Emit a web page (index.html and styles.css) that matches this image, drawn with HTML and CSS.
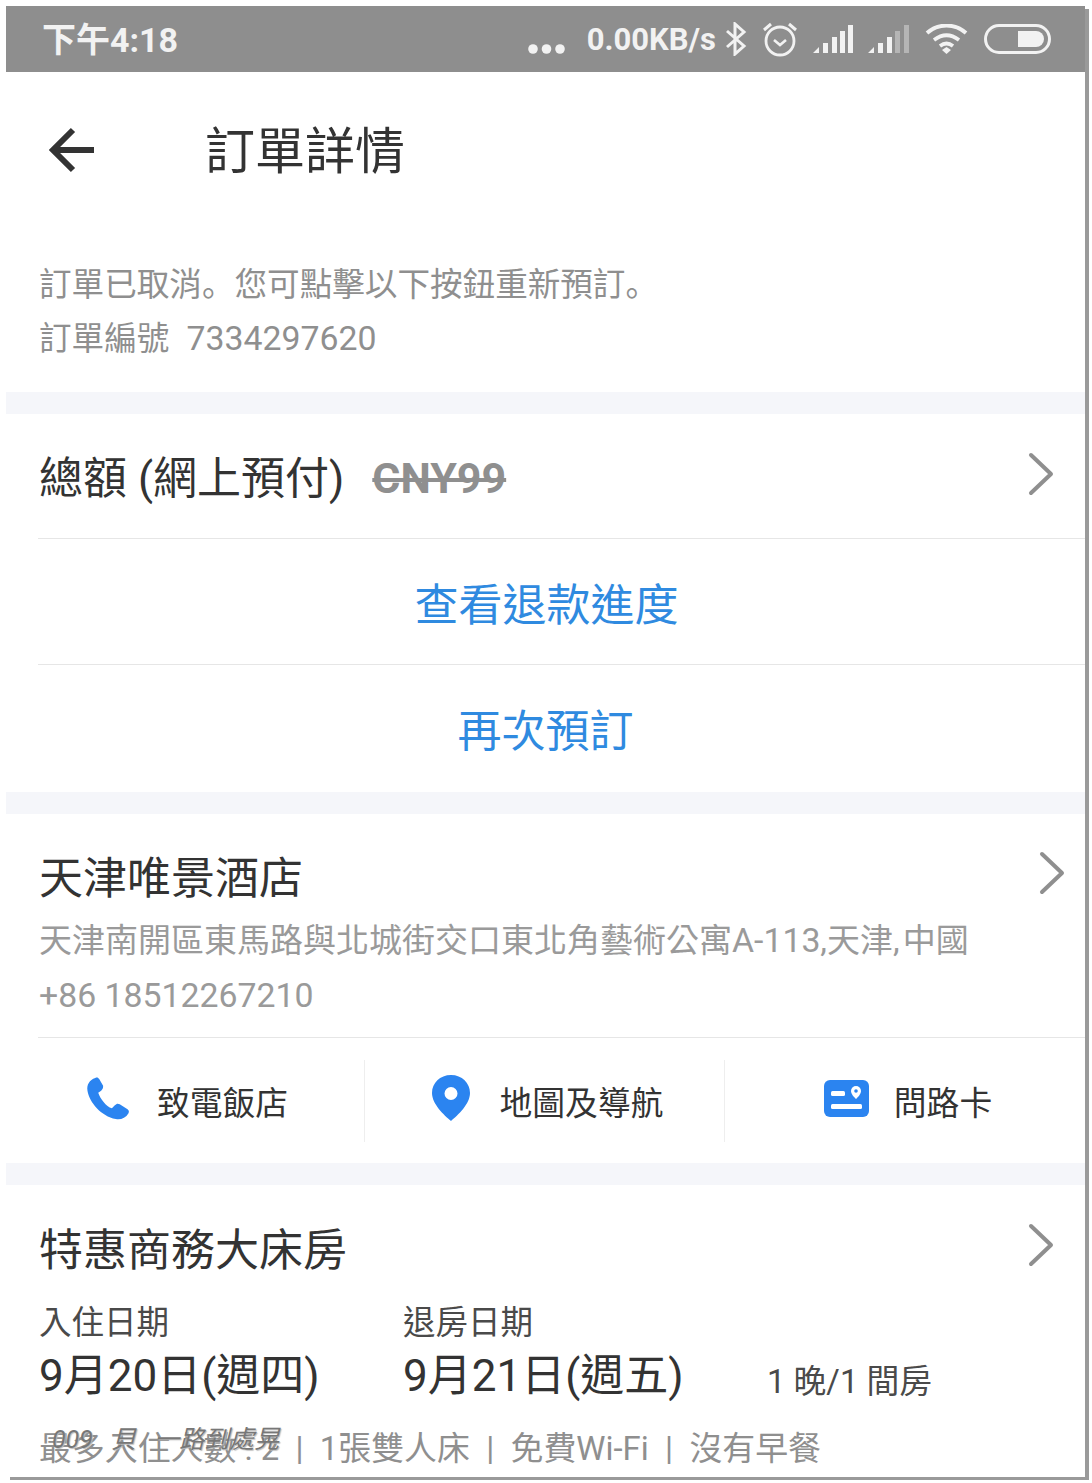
FILE: index.html
```html
<!DOCTYPE html>
<html lang="zh-Hant">
<head>
<meta charset="utf-8">
<title>訂單詳情</title>
<link rel="stylesheet" href="styles.css">
</head>
<body>
<main class="frame">
  <header class="status">
    <span class="clock">下午4:18</span>
    <div class="status-right">
      <svg class="i-dots" width="37" height="10" viewBox="0 0 37 10"><circle cx="5" cy="5" r="4.800"/><circle cx="18.500" cy="5" r="4.800"/><circle cx="32" cy="5" r="4.800"/></svg>
      <span class="speed">0.00KB/s</span>
      <svg class="i-bt" width="22" height="34" viewBox="0 0 22 34"><path d="M2 9 19 24 10 32V2l9 8L2 25" fill="none" stroke="#f2f2f2" stroke-width="3"/></svg>
      <svg class="i-alarm" width="34" height="36" viewBox="0 0 34 36"><circle cx="17" cy="20" r="14" fill="none" stroke="#f2f2f2" stroke-width="2.800"/><path d="M11 19l6 5 6-5" fill="none" stroke="#f2f2f2" stroke-width="2.600"/><path d="M1 9l7-6M33 9l-7-6" stroke="#f2f2f2" stroke-width="3"/></svg>
      <svg class="i-sig" width="40" height="30" viewBox="0 0 40 30"><path d="M0 29 6 23V29ZM10 19h5v10h-5ZM19 13h5v16h-5ZM27 7h5v22h-5ZM35 1h5v28h-5Z" fill="#f2f2f2"/></svg>
      <svg class="i-sig" width="41" height="30" viewBox="0 0 41 30"><path d="M0 29 6 23V29ZM10 19h5v10h-5ZM19 13h5v16h-5Z" fill="#f2f2f2"/><path d="M27 7h5v22h-5ZM36 1h5v28h-5Z" fill="#b5b5b5"/></svg>
      <svg class="i-wifi" width="43" height="30" viewBox="0 0 43 30"><path d="M2 9C13-1 30-1 41 9M9 16c8-6 17-6 25 0M15 22c4-3 9-3 13 0" fill="none" stroke="#f2f2f2" stroke-width="3.800"/><path d="M17 26l4.500-3 4.500 3-4.500 4z" fill="#f2f2f2"/></svg>
      <svg class="i-batt" width="67" height="30" viewBox="0 0 67 30"><rect x="1.500" y="1.500" width="64" height="27" rx="13.500" fill="none" stroke="#f2f2f2" stroke-width="3"/><path d="M34 7h18a8 8 0 0 1 0 16H34z" fill="#f2f2f2"/></svg>
    </div>
  </header>

  <div class="toolbar">
    <svg class="i-back" width="46" height="46" viewBox="0 0 46 46"><path d="M45 23H5M24 3 4 23l20 20" fill="none" stroke="#333" stroke-width="6"/></svg>
    <h1 class="title">訂單詳情</h1>
  </div>

  <section class="notice">
    <p>訂單已取消<span class="punct" lang="zh-Hans">。</span>您可點擊以下按鈕重新預訂<span class="punct" lang="zh-Hans">。</span></p>
    <p>訂單編號&nbsp; <span class="lat">7334297620</span></p>
  </section>

  <div class="band"></div>

  <section>
    <div class="row-total">
      <div class="total-text">總額 (網上預付)<s class="price">CNY99</s></div>
      <svg class="chev" width="26" height="44" viewBox="0 0 26 44"><path d="M3 3l20 19L3 41" fill="none" stroke="#8f8f8f" stroke-width="4" stroke-linecap="round" stroke-linejoin="round"/></svg>
    </div>
    <a class="row-link row-refund">查看退款進度</a>
    <a class="row-link row-rebook">再次預訂</a>
  </section>

  <div class="band"></div>

  <section class="hotel">
    <div class="hotel-head">
      <h2 class="heading">天津唯景酒店</h2>
      <svg class="chev" width="26" height="44" viewBox="0 0 26 44"><path d="M3 3l20 19L3 41" fill="none" stroke="#8f8f8f" stroke-width="4" stroke-linecap="round" stroke-linejoin="round"/></svg>
    </div>
    <p class="addr">天津南開區東馬路與北城街交口東北角藝術公寓<span class="lat">A-113,</span>天津<span class="lat comma">,</span>中國</p>
    <p class="addr"><span class="lat">+86 18512267210</span></p>
    <div class="actions">
      <div class="action action-left">
        <svg width="44" height="43" viewBox="0 0 44 44"><path d="M9 1C3 3 0 8 1 14c2 12 14 26 29 29 5 1 10-1 13-6 1-2 0-3-1-4l-8-5c-2-1-3-1-5 1l-3 3C20 30 14 22 12 16l3-2c2-2 2-3 2-5l-4-7c-1-1-2-2-4-1z" fill="#2b84f0"/></svg>
        <span>致電飯店</span>
      </div>
      <div class="action action-mid">
        <svg width="38" height="46" viewBox="0 0 38 46"><path fill-rule="evenodd" d="M19 0C8 0 0 8 0 18c0 11 12 22 19 28 7-6 19-17 19-28C38 8 30 0 19 0zm0 12a6.500 6.500 0 1 1 0 13 6.500 6.500 0 0 1 0-13z" fill="#2b84f0"/></svg>
        <span>地圖及導航</span>
      </div>
      <div class="action action-right">
        <svg width="45" height="37" viewBox="0 0 45 37"><rect width="45" height="37" rx="6" fill="#2b84f0"/><rect x="7" y="24" width="31" height="5" rx="1.500" fill="#fff"/><rect x="7" y="11" width="14" height="5" rx="1.500" fill="#fff"/><path d="M32 6a5 5 0 0 0-5 5c0 3 3 6 5 8 2-2 5-5 5-8a5 5 0 0 0-5-5z" fill="#fff"/><circle cx="32" cy="11" r="1.800" fill="#2b84f0"/></svg>
        <span>問路卡</span>
      </div>
    </div>
  </section>

  <div class="band"></div>

  <section class="room">
    <div class="room-head">
      <h2 class="heading">特惠商務大床房</h2>
      <svg class="chev" width="26" height="44" viewBox="0 0 26 44"><path d="M3 3l20 19L3 41" fill="none" stroke="#8f8f8f" stroke-width="4" stroke-linecap="round" stroke-linejoin="round"/></svg>
    </div>
    <div class="dates">
      <div class="date-col">
        <span class="date-label">入住日期</span>
        <span class="date-value">9月20日(週四)</span>
      </div>
      <div class="date-col">
        <span class="date-label">退房日期</span>
        <span class="date-value">9月21日(週五)</span>
      </div>
      <span class="nights">1 晚/1 間房</span>
    </div>
    <p class="info">最多入住人數&nbsp;: 2&nbsp; |&nbsp; 1張雙人床&nbsp; |&nbsp; 免費Wi-Fi&nbsp; |&nbsp; 沒有早餐</p>
  </section>
  <span class="watermark">009 貝 一路到處晃</span>
</main>
</body>
</html>
```
FILE: styles.css
```css
* { box-sizing: border-box; }
html, body { margin: 0; padding: 0; background: #fff; }
body { width: 1092px; height: 1483px; overflow: hidden; padding: 6px 0 0 6px; font-family: Roboto, "Noto Sans CJK TC", sans-serif; }
p, h1, h2 { margin: 0; font-weight: 400; }

.frame { position: relative; width: 1079px; height: 1471px; background: #fff; overflow: hidden; box-shadow: 4px 3px 0 #9a9a9a; }

.status { height: 66px; background: #8e8e8e; color: #f2f2f2; display: flex; align-items: center; justify-content: space-between; padding: 0 34px 0 36px; }
.clock { font-size: 34px; font-weight: 700; margin-top: -4px; }
.status-right { display: flex; align-items: center; }
.status-right svg { display: block; fill: #f2f2f2; }
.speed { font-size: 31px; font-weight: 700; margin: 0 9px 0 22px; }
.i-dots { margin-top: 20px; }
.i-alarm { margin-left: 16px; }
.i-sig { margin-left: 16px; }
.i-sig + .i-sig { margin-left: 15px; }
.i-wifi { margin-left: 16px; }
.i-batt { margin-left: 16px; }

.toolbar { height: 156px; display: flex; align-items: center; padding-left: 43px; }
.i-back { display: block; }
.title { font-size: 50px; color: #333; margin: 4px 0 0 110px; line-height: 60px; }

.notice { padding: 30px 33px 26px; font-size: 32.600px; line-height: 54px; color: #8f8f8f; }
.punct { font-family: "Noto Sans CJK SC", sans-serif; line-height: 0; }
.lat { font-size: 33.800px; line-height: 0; }
.notice .lat { margin-left: 1px; }
.comma { margin-right: 3px; }

.band { height: 22px; background: #f5f6fa; }

.row-total { height: 125px; margin-left: 32px; padding: 0 31px 0 1px; border-bottom: 1px solid #e6e6e6; display: flex; align-items: center; justify-content: space-between; }
.row-total .chev { margin-top: -5px; }
.total-text { font-size: 44px; color: #333; margin-top: -2px; }
.price { font-size: 43px; font-weight: 700; color: #8f8f8f; margin-left: 28px; vertical-align: 1px; }
.chev { display: block; flex: none; }

.row-link { display: flex; align-items: center; justify-content: center; font-size: 44px; color: #2f8ae0; }
.row-refund { height: 126px; margin-left: 32px; padding-right: 30px; border-bottom: 1px solid #e6e6e6; }
.row-rebook { height: 127px; padding-bottom: 2px; }

.hotel { padding-top: 37px; }
.hotel-head { display: flex; align-items: center; justify-content: space-between; padding: 0 20px 0 33px; height: 56px; }
.hotel-head .chev { margin-top: -12px; }
.heading { font-size: 44px; color: #333; line-height: 56px; }
.addr { font-size: 33px; line-height: 55px; color: #9a9a9a; padding-left: 33px; white-space: nowrap; }
.addr:first-of-type { margin-top: 6px; }
.actions { margin: 14px 0 0 32px; border-top: 1px solid #e6e6e6; height: 126px; display: grid; grid-template-columns: 326px 361px 1fr; align-items: center; }
.action { display: flex; align-items: center; justify-content: center; gap: 27px; height: 82px; font-size: 32.800px; color: #333; }
.action svg { display: block; flex: none; margin-top: -5px; }
.action-left { padding-right: 28px; }
.action-mid { border-left: 1px solid #eee; border-right: 1px solid #eee; gap: 30px; padding-left: 6px; }
.action-right { padding-left: 6px; gap: 25px; }

.room { padding: 38px 31px 0 33px; }
.room-head { display: flex; align-items: center; justify-content: space-between; height: 56px; }
.room-head .chev { margin-top: -12px; }
.dates { display: grid; grid-template-columns: 364px 364px 1fr; margin-top: 17px; }
.date-col { display: flex; flex-direction: column; }
.date-label { font-size: 32.500px; line-height: 54px; color: #4a4a4a; }
.date-value { font-size: 44px; line-height: 52px; color: #333; }
.nights { font-size: 32.800px; color: #4a4a4a; align-self: end; line-height: 40px; }
.info { font-size: 32.900px; line-height: 54px; color: #8f8f8f; margin-top: 20px; white-space: nowrap; }

.watermark { position: absolute; left: 46px; top: 1413px; font-size: 25px; font-style: italic; word-spacing: 12px; color: #777; text-shadow: 1px 1px 1px #bbb; white-space: nowrap; }
```
